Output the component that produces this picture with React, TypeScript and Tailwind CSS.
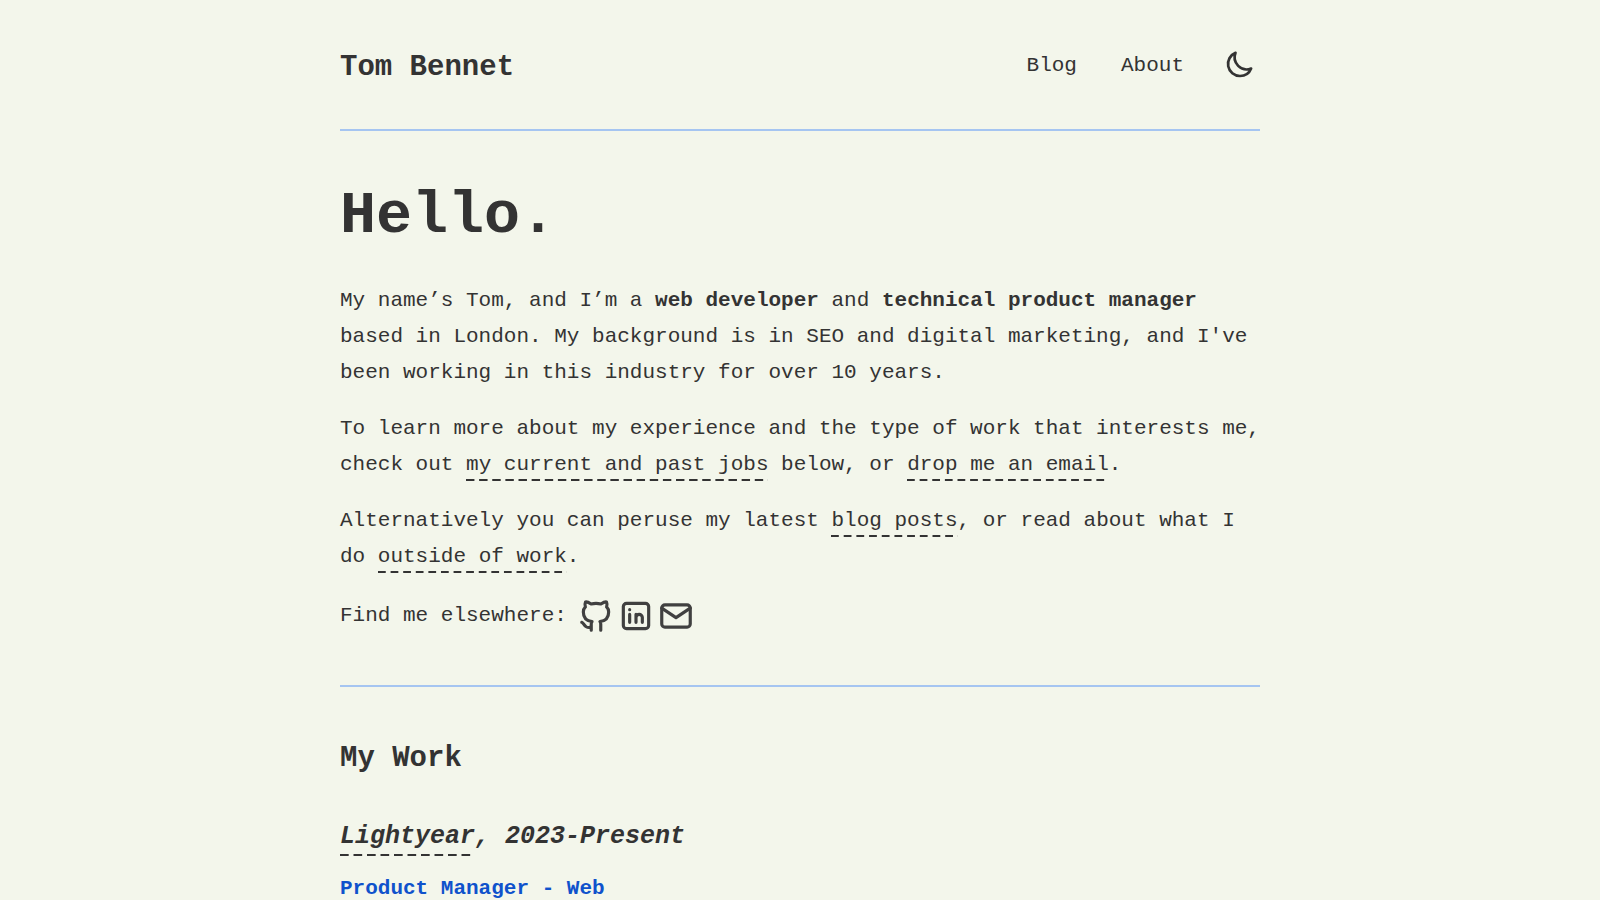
import type { ReactNode } from "react";

function TextLink({ href, children }: { href: string; children: ReactNode }) {
  return (
    <a
      href={href}
      className="bg-[linear-gradient(to_right,#333_62%,transparent_62%)] bg-[length:13px_2px] bg-bottom-left [background-repeat:round_no-repeat] pb-[5px]"
    >
      {children}
    </a>
  );
}

function IconLink({ href, label, children }: { href: string; label: string; children: ReactNode }) {
  return (
    <a href={href} aria-label={label}>
      <svg
        viewBox="0 0 24 24"
        className="size-[38px] fill-none stroke-[#404040] stroke-2"
        strokeLinecap="round"
        strokeLinejoin="round"
      >
        {children}
      </svg>
    </a>
  );
}

export default function App() {
  return (
    <div className="min-h-screen bg-[#f3f6eb] px-6 font-['Liberation_Mono',monospace] text-[21px] leading-9 text-[#333]">
      <div className="mx-auto max-w-[920px]">
        <header className="flex items-end justify-between border-b-2 border-[#a5c5f1] pt-12 pb-[43px]">
          <a href="#home" className="text-[29px] font-bold">
            Tom Bennet
          </a>
          <nav className="flex items-center gap-11 pb-[2px]">
            <a href="#blog">Blog</a>
            <a href="#about">About</a>
            <button type="button" aria-label="Toggle dark mode" className="mb-1 -ml-2 px-1">
              <svg
                viewBox="0 0 24 24"
                className="size-8 fill-none stroke-[#333] stroke-2"
                strokeLinecap="round"
                strokeLinejoin="round"
              >
                <path d="M20.354 15.354A9 9 0 018.646 3.646 9.003 9.003 0 0012 21a9.003 9.003 0 008.354-5.646z" />
              </svg>
            </button>
          </nav>
        </header>

        <main>
          <section className="border-b-2 border-[#a5c5f1] pt-[49px] pb-12">
            <h1 className="mb-[31px] text-[60px] leading-[72px] font-bold">Hello.</h1>
            <div className="flex flex-col gap-5">
              <p>
                My name’s Tom, and I’m a <strong>web developer</strong> and{" "}
                <strong>technical product manager</strong> based in London. My background is in SEO and digital
                marketing, and I've been working in this industry for over 10 years.
              </p>
              <p>
                To learn more about my experience and the type of work that interests me, check out{" "}
                <TextLink href="#work">my current and past jobs</TextLink> below, or{" "}
                <TextLink href="#email">drop me an email</TextLink>.
              </p>
              <p>
                Alternatively you can peruse my latest <TextLink href="#blog">blog posts</TextLink>, or read about
                what I do <TextLink href="#about">outside of work</TextLink>.
              </p>
              <div className="flex items-center gap-[10px] py-[2px]">
                <p>Find me elsewhere:</p>
                <div className="flex gap-[2px]">
                  <IconLink href="#github" label="GitHub">
                    <path d="M9 19c-4.3 1.4 -4.3 -2.5 -6 -3m12 5v-3.5c0 -1 .1 -1.4 -.5 -2c2.8 -.3 5.5 -1.4 5.5 -6a4.6 4.6 0 0 0 -1.3 -3.2a4.2 4.2 0 0 0 -.1 -3.2s-1.1 -.3 -3.5 1.3a12.3 12.3 0 0 0 -6.2 0c-2.4 -1.6 -3.5 -1.3 -3.5 -1.3a4.2 4.2 0 0 0 -.1 3.2a4.6 4.6 0 0 0 -1.3 3.2c0 4.6 2.7 5.7 5.5 6c-.6 .6 -.6 1.2 -.5 2v3.5" />
                  </IconLink>
                  <IconLink href="#linkedin" label="LinkedIn">
                    <rect x="4" y="4" width="16" height="16" rx="2" />
                    <path d="M8 11v5M8 8v.01M12 16v-5M16 16v-3a2 2 0 0 0 -4 0" />
                  </IconLink>
                  <IconLink href="#email" label="Email">
                    <rect x="3" y="5" width="18" height="14" rx="2" />
                    <path d="M3 7l9 6l9 -6" />
                  </IconLink>
                </div>
              </div>
            </div>
          </section>

          <section id="work" className="pt-[54px]">
            <h2 className="mb-[42px] text-[29px] font-bold">My Work</h2>
            <h3 className="mb-4 text-[25px] font-bold italic">
              <TextLink href="#lightyear">Lightyear</TextLink>, 2023-Present
            </h3>
            <h4 className="font-bold text-[#0f52cc]">Product Manager - Web</h4>
          </section>
        </main>
      </div>
    </div>
  );
}
